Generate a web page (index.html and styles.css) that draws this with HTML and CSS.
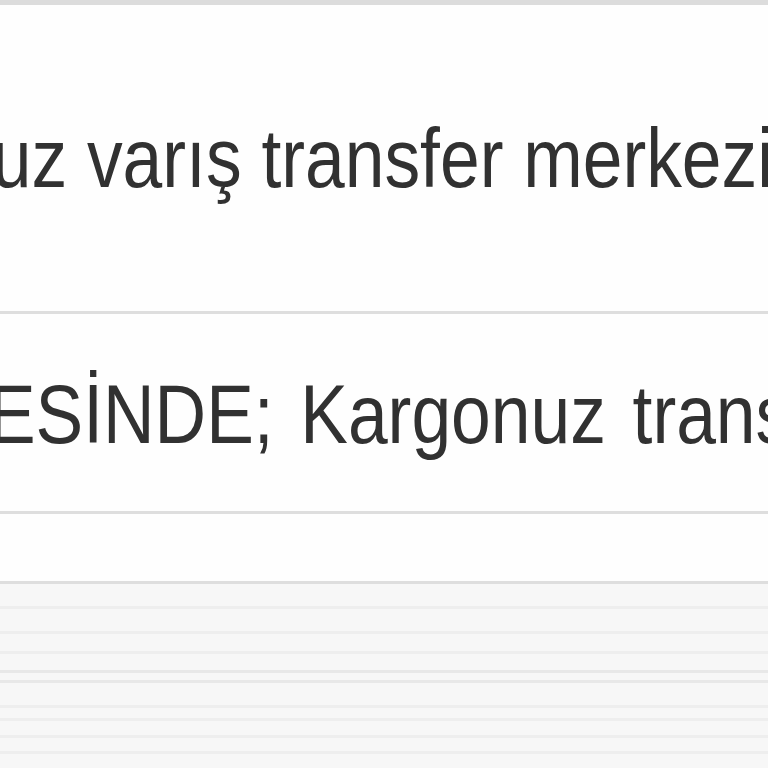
FILE: index.html
```html
<!DOCTYPE html>
<html lang="tr">
<head>
<meta charset="utf-8">
<title>Kargo takip</title>
<link rel="stylesheet" href="styles.css">
</head>
<body>
<div class="page">
  <div class="table">
    <div class="row row-first">
      <div class="cell"><span class="text text-one">nuz varış transfer merkezine ulaşmıştır</span></div>
    </div>
    <div class="row row-second">
      <div class="cell"><span class="text text-two">ESİNDE; Kargonuz transfer merkezinden çıkmıştır</span></div>
    </div>
    <div class="row row-empty"></div>
  </div>
  <div class="footer">
    <div class="stripe s1"></div>
    <div class="stripe s2"></div>
    <div class="stripe s3"></div>
    <div class="stripe s4"></div>
    <div class="stripe s5"></div>
    <div class="stripe s6"></div>
    <div class="stripe s7"></div>
    <div class="stripe s8"></div>
    <div class="stripe s9"></div>
  </div>
</div>
</body>
</html>
```
FILE: styles.css
```css
html, body {
  margin: 0;
  padding: 0;
  background: #fefefe;
}
.page {
  width: 768px;
  height: 768px;
  overflow: hidden;
  display: flex;
  flex-direction: column;
  font-family: "Liberation Sans", Arial, sans-serif;
}
.table {
  display: flex;
  flex-direction: column;
  border-top: 5px solid #dcdcdc;
}
.row {
  display: flex;
  align-items: center;
  overflow: hidden;
  border-bottom: 3px solid #dedede;
  flex-shrink: 0;
}
.row-first { height: 306px; }
.row-second { height: 197px; }
.row-empty { height: 67px; }
.cell {
  white-space: nowrap;
  width: 100%;
}
.text {
  display: inline-block;
  font-size: 83px;
  color: #313131;
  line-height: 1;
  transform: scaleX(0.86);
  transform-origin: left center;
}
.text-one {
  margin-left: -48px;
}
.text-two {
  margin-left: -12px;
  margin-top: 4px;
  word-spacing: 8px;
}
.footer {
  flex: 1;
  background: #f7f7f7;
  display: flex;
  flex-direction: column;
}
.stripe {
  height: 3px;
  background: #eeeeee;
  flex-shrink: 0;
}
.s1 { margin-top: 22px; }
.s2 { margin-top: 22px; }
.s3 { margin-top: 17px; }
.s4 { margin-top: 16px; background: #e8e8e8; }
.s5 { margin-top: 7px; background: #e8e8e8; }
.s6 { margin-top: 22px; }
.s7 { margin-top: 10px; }
.s8 { margin-top: 14px; }
.s9 { margin-top: 13px; }
```
